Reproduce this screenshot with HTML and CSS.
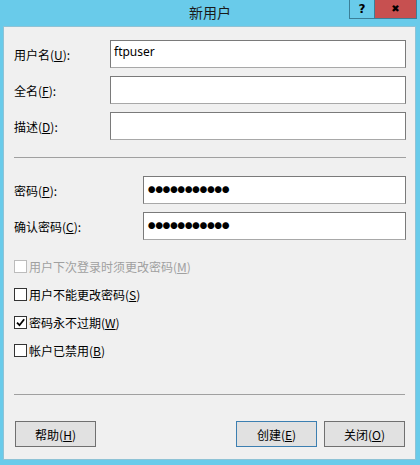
FILE: index.html
```html
<!DOCTYPE html>
<html lang="zh-CN">
<head>
    <meta charset="UTF-8">
    <title>新用户</title>
    <link rel="stylesheet" href="styles.css">
</head>
<body>
    <div class="window">
        <!-- Barra de título -->
        <div class="titlebar">
            <span></span>
            <span class="title">新用户</span>
            <div class="caption-buttons">
                <span class="cap-btn help">?</span>
                <span class="cap-btn close">&#x2716;</span>
            </div>
        </div>

        <div class="client">
            <!-- Datos generales -->
            <div class="form-grid names">
                <label>用户名(<u>U</u>):</label>
                <div class="field">ftpuser</div>
                <label>全名(<u>F</u>):</label>
                <div class="field"></div>
                <label>描述(<u>D</u>):</label>
                <div class="field"></div>
            </div>

            <div class="separator sep-top"></div>

            <!-- Contraseña -->
            <div class="form-grid passwords">
                <label>密码(<u>P</u>):</label>
                <div class="field"><span class="dots">●●●●●●●●●●●</span></div>
                <label>确认密码(<u>C</u>):</label>
                <div class="field"><span class="dots">●●●●●●●●●●●</span></div>
            </div>

            <!-- Opciones -->
            <div class="checks">
                <div class="check disabled"><span class="box"></span>用户下次登录时须更改密码(<u>M</u>)</div>
                <div class="check"><span class="box"></span>用户不能更改密码(<u>S</u>)</div>
                <div class="check"><span class="box"><svg width="9" height="9" viewBox="0 0 9 9"><path d="M1 4.6 L3.5 7.2 L8.2 1.2" fill="none" stroke="#000" stroke-width="1.8"/></svg></span>密码永不过期(<u>W</u>)</div>
                <div class="check"><span class="box"></span>帐户已禁用(<u>B</u>)</div>
            </div>

            <div class="separator sep-bottom"></div>

            <div class="buttons">
                <button class="btn">帮助(<u>H</u>)</button>
                <span class="spacer"></span>
                <button class="btn default">创建(<u>E</u>)</button>
                <button class="btn">关闭(<u>O</u>)</button>
            </div>
        </div>
    </div>
</body>
</html>
```

FILE: styles.css
```css
body {
    margin: 0;
    font-family: "Noto Sans", "Noto Sans CJK SC", sans-serif;
    font-size: 12px;
    color: #000;
}
.window {
    width: 420px;
    height: 465px;
    background-color: #69cbea;
    display: flex;
    flex-direction: column;
}
.titlebar {
    height: 26px;
    display: grid;
    grid-template-columns: 1fr auto 1fr;
    align-items: start;
}
.title {
    font-family: "Noto Sans CJK SC", sans-serif;
    font-size: 14px;
    line-height: 24px;
    color: #1a1a1a;
}
.caption-buttons {
    justify-self: end;
    display: flex;
    margin-right: 3px;
}
.cap-btn {
    height: 18px;
    line-height: 18px;
    text-align: center;
    font-family: "DejaVu Sans", sans-serif;
    font-weight: bold;
    font-size: 12px;
}
.help {
    width: 24px;
    border: 1px solid #3b7f98;
    border-top: none;
    border-right: none;
    background-color: #69cbea;
}
.close {
    width: 41px;
    border: 1px solid #3b7f98;
    border-top: none;
    background-color: #c75050;
    font-size: 10px;
}
.client {
    flex: 1;
    margin: 0 4px 5px 3px;
    background-color: #f0f0f0;
    border: 1px solid #8fc3d6;
    padding: 13px 9px 0 10px;
}
.form-grid {
    display: grid;
    row-gap: 8px;
    align-items: center;
}
.names {
    grid-template-columns: 96px 1fr;
}
.passwords {
    grid-template-columns: 129px 1fr;
}
.form-grid label {
    font-family: "Noto Sans CJK SC", sans-serif;
}
.field {
    background-color: #fff;
    border: 1px solid #7a7a7a;
    border-bottom-color: #a8a8a8;
    padding: 1px 3px 0;
    box-sizing: border-box;
    height: 28px;
    line-height: 20px;
}
.dots {
    font-family: "Noto Sans CJK SC", sans-serif;
    font-size: 7.4px;
    line-height: 20px;
    padding-left: 1px;
}
.separator {
    border-top: 1px solid #a0a0a0;
}
.sep-top {
    margin: 17px 0 18px 0;
}
.sep-bottom {
    margin: 30px 1px 26px 0;
}
.checks {
    margin-top: 12px;
}
.check {
    height: 28px;
    display: flex;
    align-items: center;
    font-family: "Noto Sans CJK SC", sans-serif;
}
.box {
    width: 13px;
    height: 13px;
    box-sizing: border-box;
    border: 1px solid #333;
    background-color: #fff;
    margin-right: 2px;
    display: flex;
    align-items: center;
    justify-content: center;
}
.check.disabled {
    color: #a0a0a0;
}
.check.disabled .box {
    border-color: #bcbcbc;
}
.buttons {
    display: flex;
    gap: 7px;
    padding-left: 1px;
    padding-right: 1px;
}
.spacer {
    flex: 1;
}
.btn {
    width: 81px;
    height: 26px;
    background-color: #e1e1e1;
    border: 1px solid #707070;
    font-family: "Noto Sans CJK SC", sans-serif;
    font-size: 12px;
    color: #000;
    padding: 0;
}
.btn.default {
    border-color: #3c7fb1;
}
```
